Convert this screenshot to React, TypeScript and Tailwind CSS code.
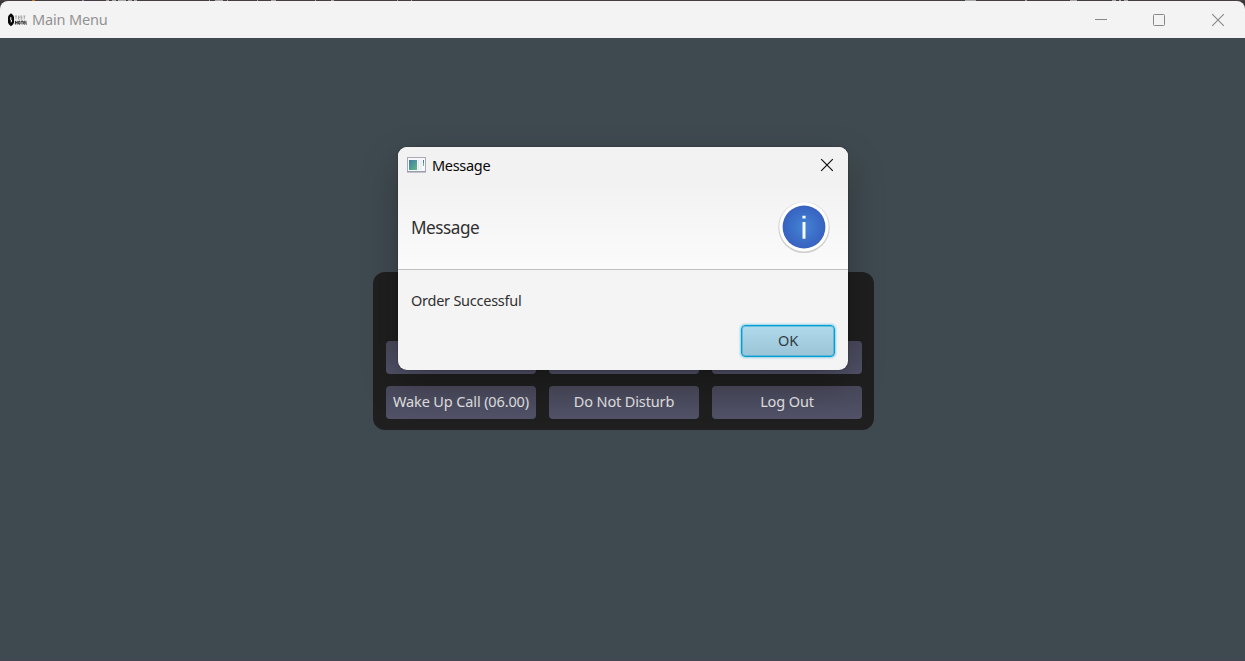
import React from "react";

function BackdropEdge() {
  return (
    <svg width="1245" height="1" className="block shrink-0" shapeRendering="crispEdges" aria-hidden="true">
      <rect width="1245" height="1" fill="#443e42" />
      <path d="M106 .5h3M112 .5h4M118 .5h8M128 .5h4M134 .5h3M209 .5h1M215 .5h8M227 .5h1M257 .5h1M271 .5h5M315 .5h1M331 .5h3M397 .5h1M411 .5h1M965 .5h11M1025 .5h2M1070 .5h7M1112 .5h4M1119 .5h2M1124 .5h4" stroke="#a9a6a8" />
      <path d="M32 .5h3" stroke="#c77522" />
      <path d="M82 .5h2" stroke="#a783aa" />
    </svg>
  );
}

function HotelLogo() {
  return (
    <svg width="20" height="16" viewBox="0 0 20 16" className="shrink-0" aria-hidden="true">
      <path
        fillRule="evenodd"
        fill="#080808"
        d="M4 1.200 6.200 3.300 7 5V10.500L6.200 12.200 4 14.200 1.800 12.200 1 10.500V5L1.800 3.300ZM3.200 5.200V8.500L4.300 7.200V5ZM3.800 10.800 5 9.600V7.200L3.800 8.600Z"
      />
      <path d="M8 4h2M9 4v3.200M12.800 4h-1.300v3.200h1.300M11.500 5.600h1.300M15.300 4h-1.500v1.600h1.200v1.600h-1.400M16.300 4h2M17.300 4v3.200" stroke="#8b8b8b" strokeWidth=".7" fill="none" />
      <path d="M8.400 8.800v3.700M10.200 8.800v3.700M8.400 10.600h1.800M11.700 9.200h1.300v2.900h-1.300zM14 9.200h2M15 9.200v3.300M17.900 9.200h-1.100v2.900h1.100M16.800 10.600h1M18.900 8.800v3.400h.8" stroke="#181818" strokeWidth=".9" fill="none" />
    </svg>
  );
}

function WindowBar() {
  return (
    <header className="flex h-[37px] shrink-0 items-center rounded-t-lg bg-[#f3f3f3] pl-[7px]">
      <HotelLogo />
      <span className="ml-[5px] pb-0.5 text-[14.5px] leading-5 tracking-[-0.17px] text-[#929292]">Main Menu</span>
      <div className="ml-auto flex text-[#878787]">
        <div className="flex h-9 w-[58px] items-center justify-center">
          <svg width="14" height="14" fill="none" stroke="currentColor"><path d="M1 6.500h12" /></svg>
        </div>
        <div className="flex h-9 w-[58px] items-center justify-center">
          <svg width="14" height="14" fill="none" stroke="currentColor"><rect x="1.500" y="1.500" width="11" height="11" rx="1" /></svg>
        </div>
        <div className="flex h-9 w-[57px] items-center justify-center pl-0.5">
          <svg width="14" height="14" fill="none" stroke="currentColor" strokeWidth="1.100"><path d="m1.200 1.200 11.600 11.600M12.800 1.200 1.200 12.800" /></svg>
        </div>
      </div>
    </header>
  );
}

const menuItems = ["", "", "", "Wake Up Call (06.00)", "Do Not Disturb", "Log Out"];

function MenuPanel() {
  return (
    <div className="mt-[234px] ml-[373px] h-[158px] w-[501px] rounded-xl bg-[#1f1f1f] pt-[69px] pl-[13px]">
      <div className="grid grid-cols-[150px_150px_150px] gap-x-[13px] gap-y-3">
        {menuItems.map((label, i) => (
          <button key={i} className="flex h-[33px] items-center justify-center rounded-[4px] bg-linear-to-b from-[#49495c] to-[#515168] pb-px text-[14.5px] tracking-[-0.13px] whitespace-nowrap text-[#e1e1e1]">
            {label}
          </button>
        ))}
      </div>
    </div>
  );
}

function InfoIcon() {
  return (
    <svg width="54" height="54" viewBox="0 0 54 54" aria-hidden="true">
      <defs>
        <radialGradient id="info-blue">
          <stop offset="0" stopColor="#4484d5" />
          <stop offset="1" stopColor="#3762c0" />
        </radialGradient>
      </defs>
      <circle cx="27" cy="27.400" r="25.700" fill="#cecece" />
      <circle cx="27" cy="26.800" r="24.700" fill="#fff" />
      <circle cx="27" cy="27" r="21.400" fill="url(#info-blue)" />
      <path d="M25.400 15.800h3.200v2.700h-3.200zM25.500 22h3v16.800h-3z" fill="#f7fbff" />
    </svg>
  );
}

function MessageDialog() {
  return (
    <section className="absolute top-[147px] left-[398px] flex h-[223px] w-[450px] flex-col overflow-hidden rounded-[9px] bg-[#f4f4f4] shadow-[0_14px_36px_rgba(0,0,0,0.26),0_0_2px_rgba(0,0,0,0.35)]">
      <div className="flex h-[123px] shrink-0 flex-col border-b border-[#bfbfbf] bg-linear-to-b from-[#f2f2f2] from-30% to-[#fbfbfb]">
        <div className="flex h-9 shrink-0 items-center pl-[9px]">
          <svg width="19" height="16" viewBox="0 0 19 16" aria-hidden="true">
            <defs>
              <linearGradient id="app-tile" x2="1" y2="1">
                <stop stopColor="#4678a7" />
                <stop offset="1" stopColor="#5bbd87" />
              </linearGradient>
            </defs>
            <rect x=".5" y=".5" width="18" height="14" fill="#f8f8fa" stroke="#a6aab5" />
            <path d="M0 15h19" stroke="#8f93a0" />
            <rect x="2" y="3" width="8" height="10" fill="url(#app-tile)" />
            <path d="M11.500 3v10M14 3v10" stroke="#e5e7ec" />
            <path d="M16.500 3v3" stroke="#4377b5" />
            <path d="M16.500 6v3" stroke="#66ba8c" />
          </svg>
          <span className="ml-1.5 text-[14.5px] leading-5 tracking-[-0.3px] text-[#080808]">Message</span>
          <svg width="14" height="14" className="mr-3.5 ml-auto" fill="none" stroke="#111" strokeWidth="1.200">
            <path d="m1.200 1.200 11.600 11.600M12.800 1.200 1.200 12.800" />
          </svg>
        </div>
        <div className="flex h-[86px] items-center justify-between pt-px pr-[17px] pl-[13px]">
          <h1 className="pt-0.5 text-[17.2px] leading-6 tracking-[-0.5px] text-[#303030]">Message</h1>
          <InfoIcon />
        </div>
      </div>
      <p className="mt-[19px] ml-[13px] text-[14.5px] leading-[22px] tracking-[-0.25px] text-[#303030]">Order Successful</p>
      <button className="mt-3.5 mr-[13px] flex h-[32px] w-[94px] items-center justify-center self-end rounded-[4px] border-[1.5px] border-[#039ed3] bg-linear-to-b from-[#afdaec] to-[#9bc4d7] text-[14.5px] tracking-[-0.2px] text-[#303b40] shadow-[0_0_2px_1px_rgba(3,158,211,0.4),inset_0_0_0_1px_rgba(3,158,211,0.4)]">
        OK
      </button>
    </section>
  );
}

export default function App() {
  return (
    <div className="relative flex h-[661px] w-[1245px] flex-col overflow-hidden bg-[#393638] font-['Noto_Sans','Open_Sans',sans-serif]">
      <BackdropEdge />
      <WindowBar />
      <main className="grow border-b-2 border-[#424653] bg-[#3f4a50]">
        <MenuPanel />
      </main>
      <MessageDialog />
    </div>
  );
}
